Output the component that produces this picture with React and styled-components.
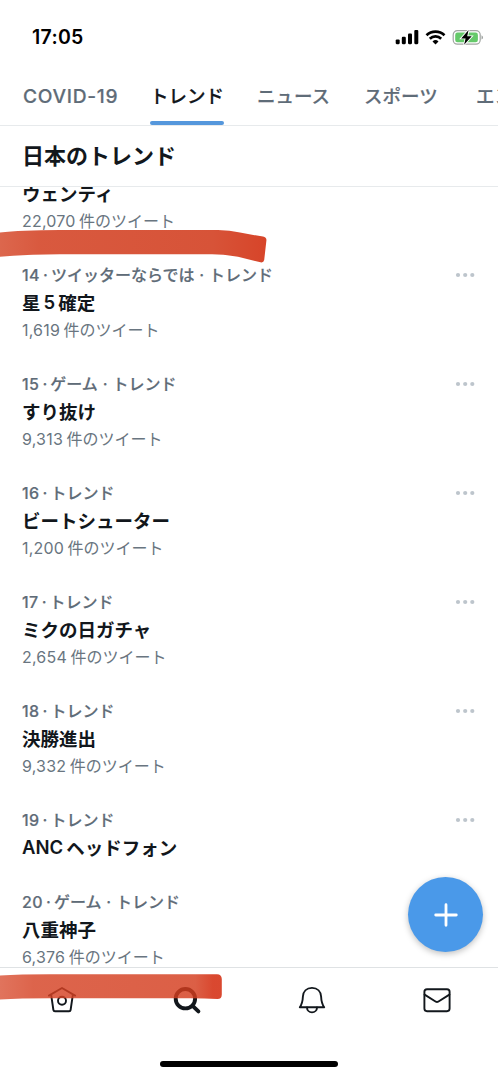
import styled, { createGlobalStyle } from "styled-components";

const GlobalStyle = createGlobalStyle`
  * {
    box-sizing: border-box;
  }
  body {
    margin: 0;
    background-color: #ffffff;
    font-family: Inter, "Noto Sans CJK JP", sans-serif;
    color: #12171c;
  }
`;

const Screen = styled.div`
  position: relative;
  display: flex;
  flex-direction: column;
  width: 498px;
  height: 1078px;
  overflow: hidden;
`;

const StatusBar = styled.header`
  display: flex;
  align-items: center;
  justify-content: space-between;
  height: 66px;
  padding: 7px 14px 0 32px;
  flex-shrink: 0;
`;

const Clock = styled.span`
  font-size: 19.5px;
  font-weight: 600;
  letter-spacing: 0.3px;
  color: #000000;
`;

const StatusIcons = styled.svg`
  width: 90px;
  height: 18px;
`;

const Tabs = styled.nav`
  display: flex;
  gap: 33px;
  height: 60px;
  padding-left: 23px;
  border-bottom: 1px solid #e7eaec;
  flex-shrink: 0;
`;

const Tab = styled.a`
  display: flex;
  align-items: center;
  position: relative;
  flex-shrink: 0;
  width: ${(props) => props.$width}px;
  padding-bottom: ${(props) => (props.$latin ? 0 : 2)}px;
  font-size: ${(props) => (props.$latin ? 19.2 : 18.5)}px;
  font-weight: 500;
  white-space: nowrap;
  letter-spacing: ${(props) => (props.$latin ? 0.7 : 0)}px;
  color: ${(props) => (props.$active ? "#12171c" : "#5f6c78")};
  -webkit-text-stroke: 0.2px;

  &::after {
    content: "";
    display: ${(props) => (props.$active ? "block" : "none")};
    position: absolute;
    left: 0;
    right: 0;
    bottom: 0;
    height: 4px;
    border-radius: 2px;
    background-color: #5597dc;
  }
`;

const Heading = styled.h1`
  display: flex;
  align-items: center;
  height: 61px;
  margin: 0;
  padding: 0 0 5px 22px;
  border-bottom: 1px solid #e7eaec;
  font-size: 22px;
  font-weight: 700;
  flex-shrink: 0;
`;

const TrendList = styled.main`
  flex: 1;
  min-height: 0;
  overflow: hidden;
`;

const TrendRow = styled.article`
  padding: 0 23px 27px 22px;
  white-space: nowrap;

  &:first-child {
    margin-top: -8px;
  }
`;

const Meta = styled.div`
  display: flex;
  align-items: center;
  height: 27px;
  font-size: 16px;
  font-weight: 500;
  color: #5f6c78;
  -webkit-text-stroke: 0.2px;
`;

const Rank = styled.span`
  letter-spacing: 0.4px;
`;

const Label = styled.span`
  padding-bottom: 2px;
`;

const Dot = styled.span`
  width: ${(props) => (props.$wide ? 14.5 : 11)}px;
  text-align: center;
`;

const More = styled.svg`
  width: 20px;
  height: 6px;
  margin-left: auto;
  fill: #bdc5cc;
`;

const Name = styled.h2`
  display: flex;
  align-items: center;
  gap: 3px;
  height: 28px;
  margin: 0;
  font-size: 18.5px;
  font-weight: 600;
`;

const Count = styled.div`
  display: flex;
  align-items: center;
  gap: 3.5px;
  height: 27px;
  font-size: 16px;
  font-weight: 400;
  color: #697580;
`;

const Amount = styled.span`
  letter-spacing: 0.2px;
`;

const BottomBar = styled.footer`
  display: flex;
  flex-direction: column;
  align-items: center;
  justify-content: space-between;
  height: 111px;
  padding: 17px 0 11px;
  border-top: 1px solid #dfe2e4;
  flex-shrink: 0;
`;

const NavIcons = styled.div`
  display: flex;
  justify-content: space-between;
  width: 405px;
  margin-left: 1px;
`;

const NavIcon = styled.svg`
  width: 30px;
  height: 30px;
  fill: none;
  stroke: #12171c;
  stroke-width: ${(props) => (props.$active ? 3.9 : 1.9)};
  stroke-linejoin: round;
  stroke-linecap: round;
`;

const HomeIndicator = styled.div`
  width: 178px;
  height: 6px;
  border-radius: 3px;
  background-color: #000000;
`;

const ComposeButton = styled.button`
  position: absolute;
  right: 15px;
  bottom: 126px;
  display: flex;
  align-items: center;
  justify-content: center;
  width: 75px;
  height: 75px;
  padding: 0;
  border: 0;
  border-radius: 50%;
  background-color: #4a99e9;
  box-shadow: 0 2px 6px rgba(0, 0, 0, 0.25);
`;

// Red marker strokes lie over the list and the bottom bar
const Marker = styled.svg`
  position: absolute;
  left: 0;
  top: ${(props) => props.$top}px;
  width: 270px;
  height: 36px;
  pointer-events: none;
`;

const trends = [
  { name: ["ウェンティ"], count: "22,070" },
  { rank: 14, topic: "ツイッターならでは", name: ["星", "5", "確定"], count: "1,619" },
  { rank: 15, topic: "ゲーム", name: ["すり抜け"], count: "9,313" },
  { rank: 16, name: ["ビートシューター"], count: "1,200" },
  { rank: 17, name: ["ミクの日ガチャ"], count: "2,654" },
  { rank: 18, name: ["決勝進出"], count: "9,332" },
  { rank: 19, name: ["ANC", "ヘッドフォン"] },
  { rank: 20, topic: "ゲーム", name: ["八重神子"], count: "6,376" },
];

const Trend = ({ rank, topic, name, count }) => (
  <TrendRow>
    {rank && (
      <Meta>
        <Rank>{rank}</Rank>
        <Dot>·</Dot>
        {topic && (
          <>
            <Label>{topic}</Label>
            <Dot $wide>·</Dot>
          </>
        )}
        <Label>トレンド</Label>
        <More viewBox="0 0 20 6">
          <circle cx="3" cy="3" r="2.1" />
          <circle cx="10.2" cy="3" r="2.1" />
          <circle cx="17.3" cy="3" r="2.1" />
        </More>
      </Meta>
    )}
    <Name>
      {name.map((part) => (
        <span key={part}>{part}</span>
      ))}
    </Name>
    {count && (
      <Count>
        <Amount>{count}</Amount>
        <Label>件のツイート</Label>
      </Count>
    )}
  </TrendRow>
);

const App = () => (
  <>
    <GlobalStyle />
    <Screen>
      <StatusBar>
        <Clock>17:05</Clock>
        <StatusIcons viewBox="0 0 90 18">
          <rect x="1.7" y="11.4" width="4" height="4.8" rx="1.1" />
          <rect x="7.8" y="8.8" width="4" height="7.4" rx="1.1" />
          <rect x="14" y="5.5" width="4" height="10.7" rx="1.1" />
          <rect x="20.3" y="2" width="4" height="14.2" rx="1.1" />
          <g fill="none" stroke="#000" strokeWidth="2.7">
            <path d="M32.5 7.2a13 13 0 0 1 18 0" />
            <path d="M35.8 10.7a8.2 8.2 0 0 1 11.4 0" />
          </g>
          <path d="M41.5 16.5l-3-3.1a4.3 4.3 0 0 1 6 0z" />
          <rect x="59.2" y="2.6" width="27" height="13.6" rx="4.2" fill="none" stroke="#a2a6a3" strokeWidth="1.2" />
          <rect x="61.2" y="4.6" width="22.7" height="9.6" rx="2.3" fill="#65c96a" />
          <path d="M87.5 7.2v4.4q1.6-.7 1.6-2.2t-1.6-2.2z" fill="#a2a6a3" />
          <path
            d="M74.6 2.1l-7.4 8.3h4.4l-1.5 6.3 7.6-8.4h-4.5z"
            stroke="#fff"
            strokeWidth="1.8"
            paintOrder="stroke"
          />
        </StatusIcons>
      </StatusBar>
      <Tabs>
        <Tab $width={94} $latin>COVID-19</Tab>
        <Tab $width={74} $active>トレンド</Tab>
        <Tab $width={74}>ニュース</Tab>
        <Tab $width={79}>スポーツ</Tab>
        <Tab $width={74}>エンタメ</Tab>
      </Tabs>
      <Heading>日本のトレンド</Heading>
      <TrendList>
        {trends.map((trend) => (
          <Trend key={trend.name[0]} {...trend} />
        ))}
      </TrendList>
      <BottomBar>
        <NavIcons>
          <NavIcon viewBox="0 0 30 30">
            <path d="M1.9 10.6L15 3l13.1 7.6" />
            <path d="M4.2 10l2.2 15q.2 1.3 1.5 1.3h14.2q1.3 0 1.5-1.3l2.2-15" />
            <circle cx="15" cy="15.7" r="4" />
          </NavIcon>
          <NavIcon viewBox="0 0 30 30" $active>
            <circle cx="13.4" cy="13.7" r="9.7" />
            <path d="M20.6 20.8l5.8 5.6" />
          </NavIcon>
          <NavIcon viewBox="0 0 30 30">
            <path d="M2.8 22.2C5.2 19 5.7 16 5.9 11.5 6.2 6.5 9.5 2.9 15 2.9s8.8 3.6 9.1 8.6c.2 4.5.7 7.5 3.1 10.7z" />
            <path d="M10 22.4a5 5 0 0 0 10 0" />
          </NavIcon>
          <NavIcon viewBox="0 0 30 30">
            <rect x="2.4" y="4.2" width="25.2" height="22" rx="2.6" />
            <path d="M2.6 9.6l11.3 7.1q1.1.6 2.2 0l11.3-7.1" />
          </NavIcon>
        </NavIcons>
        <HomeIndicator />
      </BottomBar>
      <ComposeButton aria-label="ツイートする">
        <svg width="24" height="24" viewBox="0 0 24 24" stroke="#fff" strokeWidth="2.8" strokeLinecap="round">
          <path d="M12 1.7v20.6M1.7 12h20.6" />
        </svg>
      </ComposeButton>
      <Marker $top={228} viewBox="0 0 270 36">
        <defs>
          <linearGradient id="ink" x1="0" x2="1">
            <stop offset="0" stopColor="#d64c2e" />
            <stop offset="0.15" stopColor="#d23c1d" />
            <stop offset="0.8" stopColor="#d03515" />
            <stop offset="1" stopColor="#d02404" />
          </linearGradient>
        </defs>
        <path
          d="M0 4.5Q20 2.2 60 2H218Q230 2 240 4.6L263 8.6Q266.8 9.4 266.4 12.5L264.2 32Q263.6 35 260.5 34.3L238 28.8Q226 26.3 212 26.3H60Q25 26.4 0 28.8z"
          fill="url(#ink)"
          fillOpacity="0.85"
        />
      </Marker>
      <Marker $top={972} viewBox="0 0 270 36">
        <defs>
          <linearGradient id="inkLight" x1="0" x2="1">
            <stop offset="0" stopColor="#da5539" />
            <stop offset="0.15" stopColor="#d54224" />
            <stop offset="0.88" stopColor="#d43c1d" />
            <stop offset="0.96" stopColor="#d12002" />
          </linearGradient>
        </defs>
        <path
          d="M0 3.6Q20 2.3 50 2.3H217Q221.6 2.3 221.8 7V22.5Q221.8 27 217.5 27Q205 26.2 190 26.2H50Q20 26.2 0 27.4z"
          fill="url(#inkLight)"
          fillOpacity="0.82"
        />
      </Marker>
    </Screen>
  </>
);

export default App;
